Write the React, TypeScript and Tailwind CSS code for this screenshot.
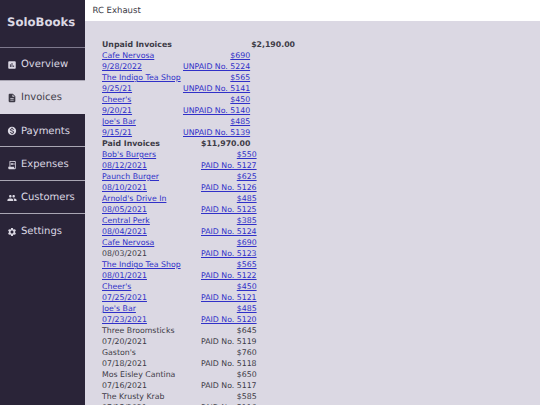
import React from "react";
import { MdAssessment, MdDescription, MdMonetizationOn, MdReceiptLong, MdPeople, MdSettings } from "react-icons/md";

type Row = [string, string, string, string, boolean, boolean?];
const unpaid: Row[] = [
  ["Cafe Nervosa", "$690", "9/28/2022", "UNPAID No. 5224", true],
  ["The Indigo Tea Shop", "$565", "9/25/21", "UNPAID No. 5141", true],
  ["Cheer's", "$450", "9/20/21", "UNPAID No. 5140", true],
  ["Joe's Bar", "$485", "9/15/21", "UNPAID No. 5139", true],
];
const paid: Row[] = [
  ["Bob's Burgers", "$550", "08/12/2021", "PAID No. 5127", true],
  ["Paunch Burger", "$625", "08/10/2021", "PAID No. 5126", true],
  ["Arnold's Drive In", "$485", "08/05/2021", "PAID No. 5125", true],
  ["Central Perk", "$385", "08/04/2021", "PAID No. 5124", true],
  ["Cafe Nervosa", "$690", "08/03/2021", "PAID No. 5123", true, true],
  ["The Indigo Tea Shop", "$565", "08/01/2021", "PAID No. 5122", true],
  ["Cheer's", "$450", "07/25/2021", "PAID No. 5121", true],
  ["Joe's Bar", "$485", "07/23/2021", "PAID No. 5120", true],
  ["Three Broomsticks", "$645", "07/20/2021", "PAID No. 5119", false],
  ["Gaston's", "$760", "07/18/2021", "PAID No. 5118", false],
  ["Mos Eisley Cantina", "$650", "07/16/2021", "PAID No. 5117", false],
  ["The Krusty Krab", "$585", "07/15/2021", "PAID No. 5116", false],
];
const nav = [
  ["Overview", MdAssessment],
  ["Invoices", MdDescription],
  ["Payments", MdMonetizationOn],
  ["Expenses", MdReceiptLong],
  ["Customers", MdPeople],
  ["Settings", MdSettings],
] as const;

function Cell({ link, right, children }: { link: boolean; right?: boolean; children: React.ReactNode }) {
  return (
    <td className={`p-0 h-[11px] leading-[11px] whitespace-nowrap ${right ? "text-right" : "text-left"}`}>
      {link ? <a href="#" className="text-[#3030c8] underline">{children}</a> : children}
    </td>
  );
}

export default function App() {
  return (
    <div className="flex h-[405px] w-[540px] overflow-hidden bg-[#dbd8e3] text-[7.8px] text-[#3d3b47] font-['DejaVu_Sans',sans-serif] [text-rendering:geometricPrecision]">
      <aside className="w-[84.5px] shrink-0 bg-[#2a2438] text-[#dbd8e3]">
        <div className="h-[47.5px] flex items-center pl-[7px] text-[11.7px] font-bold border-b border-[#7d788c]">SoloBooks</div>
        <nav className="flex flex-col">
          {nav.map(([label, Icon], i) => (
            <div
              key={label}
              className={`h-[33.3px] pt-[2px] flex items-center pl-[6.5px] gap-[4.5px] text-[10px] ${i < 5 ? "border-b" : ""} ${label === "Invoices" ? "bg-[#dbd8e3] text-[#3d3b47] border-[#dbd8e3]" : "border-[#a9a6b3]"}`}
            >
              <Icon className="w-[10px] h-[10px]" />
              {label}
            </div>
          ))}
        </nav>
      </aside>
      <main className="flex-1 min-w-0">
        <div className="h-[21px] pt-[1px] bg-white flex items-center pl-[8px] text-[8.5px]">RC Exhaust</div>
        <div className="pt-[18px] pl-[17.5px]">
          <table className="border-collapse">
            <tbody>
              <tr>
                <td className="p-0 w-[81px] h-[11px] leading-[11px] font-bold whitespace-nowrap">Unpaid Invoices</td>
                <td className="p-0 h-[11px]"></td>
                <td className="p-0 h-[11px] leading-[11px] font-bold pl-[1px]">$2,190.00</td>
              </tr>
              {unpaid.flatMap((r) => [
                <tr key={r[2] + "a"}>
                  <Cell link>{r[0]}</Cell>
                  <Cell link right>{r[1]}</Cell>
                  <td className="p-0"></td>
                </tr>,
                <tr key={r[2] + "b"}>
                  <Cell link>{r[2]}</Cell>
                  <Cell link right>{r[3]}</Cell>
                  <td className="p-0"></td>
                </tr>,
              ])}
            </tbody>
          </table>
          <table className="border-collapse">
            <tbody>
              <tr>
                <td className="p-0 w-[99px] h-[11px] leading-[11px] font-bold whitespace-nowrap">Paid Invoices</td>
                <td className="p-0 h-[11px] leading-[11px] font-bold">$11,970.00</td>
              </tr>
              {paid.flatMap((r) => [
                <tr key={r[2] + "a"}>
                  <Cell link={r[4]}>{r[0]}</Cell>
                  <Cell link={r[4]} right>{r[1]}</Cell>
                </tr>,
                <tr key={r[2] + "b"}>
                  <Cell link={r[4] && !r[5]}>{r[2]}</Cell>
                  <Cell link={r[4]} right>{r[3]}</Cell>
                </tr>,
              ])}
            </tbody>
          </table>
        </div>
      </main>
    </div>
  );
}
